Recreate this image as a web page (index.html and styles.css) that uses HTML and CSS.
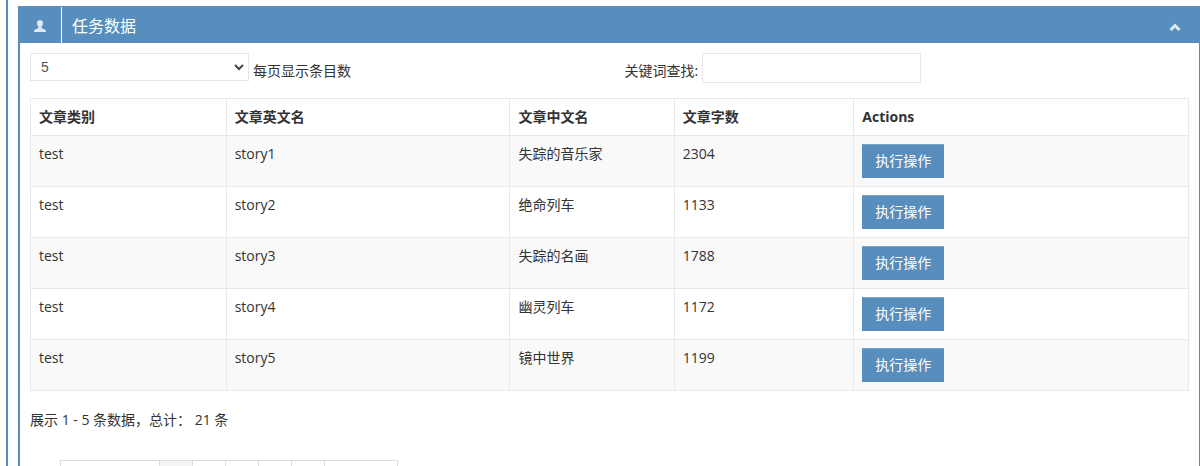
FILE: index.html
```
<!DOCTYPE html>
<html lang="zh-CN">
<head>
    <meta charset="UTF-8">
    <meta name="viewport" content="width=device-width, initial-scale=1.0">
    <title>任务数据</title>
    <link rel="stylesheet" href="styles.css">
</head>
<body>
    <div class="page-box">
        <div class="portlet">
            <div class="portlet-title">
                <div class="title-icon">
                    <svg width="12" height="12" viewBox="0 0 12 12" aria-hidden="true">
                        <path d="M6 0C4 0 3 1.100 3 2.900c0 1.500.6 2.900 1.300 3.700.4.600.3 1.300-.2 1.600L1.100 9.500C.300 9.900 0 10.400 0 11v1h12v-1c0-.6-.3-1.100-1.100-1.500L7.900 8.200c-.5-.3-.6-1-.2-1.600C8.400 5.800 9 4.400 9 2.900 9 1.100 8 0 6 0z"/>
                    </svg>
                </div>
                <h2 class="caption">任务数据</h2>
                <button type="button" class="collapse-btn" aria-label="收起">
                    <svg width="12" height="8" viewBox="0 0 12 8" aria-hidden="true">
                        <path d="M1.500 7L6 2.500L10.500 7"/>
                    </svg>
                </button>
            </div>

            <div class="portlet-body">
                <!-- Page size and search -->
                <div class="toolbar">
                    <div class="toolbar-item">
                        <span class="select-wrap">
                            <select id="page-size" class="form-control">
                                <option selected>5</option>
                                <option>15</option>
                                <option>20</option>
                            </select>
                            <svg class="select-arrow" width="10" height="7" viewBox="0 0 10 7" aria-hidden="true">
                                <path d="M1 1l4 4 4-4"/>
                            </svg>
                        </span>
                        <label for="page-size">每页显示条目数</label>
                    </div>
                    <div class="toolbar-item">
                        <label for="keyword">关键词查找:</label>
                        <input type="text" id="keyword" class="form-control search-input">
                    </div>
                </div>

                <table class="data-table">
                    <colgroup>
                        <col class="col-type">
                        <col class="col-en">
                        <col class="col-cn">
                        <col class="col-words">
                        <col class="col-actions">
                    </colgroup>
                    <thead>
                        <tr>
                            <th>文章类别</th>
                            <th>文章英文名</th>
                            <th>文章中文名</th>
                            <th>文章字数</th>
                            <th>Actions</th>
                        </tr>
                    </thead>
                    <tbody>
                        <tr>
                            <td>test</td>
                            <td>story1</td>
                            <td>失踪的音乐家</td>
                            <td>2304</td>
                            <td><button type="button" class="btn">执行操作</button></td>
                        </tr>
                        <tr>
                            <td>test</td>
                            <td>story2</td>
                            <td>绝命列车</td>
                            <td>1133</td>
                            <td><button type="button" class="btn">执行操作</button></td>
                        </tr>
                        <tr>
                            <td>test</td>
                            <td>story3</td>
                            <td>失踪的名画</td>
                            <td>1788</td>
                            <td><button type="button" class="btn">执行操作</button></td>
                        </tr>
                        <tr>
                            <td>test</td>
                            <td>story4</td>
                            <td>幽灵列车</td>
                            <td>1172</td>
                            <td><button type="button" class="btn">执行操作</button></td>
                        </tr>
                        <tr>
                            <td>test</td>
                            <td>story5</td>
                            <td>镜中世界</td>
                            <td>1199</td>
                            <td><button type="button" class="btn">执行操作</button></td>
                        </tr>
                    </tbody>
                </table>

                <p class="table-info">展示 1 - 5 条数据，总计： 21 条</p>

                <!-- Pagination -->
                <ul class="pagination">
                    <li class="prev"><a href="#">← 上一页</a></li>
                    <li class="active"><a href="#">1</a></li>
                    <li><a href="#">2</a></li>
                    <li><a href="#">3</a></li>
                    <li><a href="#">4</a></li>
                    <li><a href="#">5</a></li>
                    <li class="next"><a href="#">下一页</a></li>
                </ul>
            </div>
        </div>
    </div>
</body>
</html>
```

FILE: styles.css
```
* {
    box-sizing: border-box;
    margin: 0;
    padding: 0;
}

body {
    height: 100vh;
    overflow: hidden;
    font-family: "Open Sans", "Noto Sans CJK SC", sans-serif;
    font-size: 14px;
    line-height: 20px;
    color: #333;
    background-color: #fff;
}

.page-box {
    margin-left: 6px;
    padding: 6px 0 0 10px;
    border-left: 2px solid #578ebe;
}

.portlet {
    border: 1px solid #578ebe;
    border-left-width: 2px;
}

/* Title bar */
.portlet-title {
    display: flex;
    height: 36px;
    background-color: #578ebe;
    color: #fff;
}

.title-icon {
    display: flex;
    align-items: center;
    justify-content: center;
    width: 42px;
    padding: 2px 2px 0 0;
    border-right: 1px solid #fff;
}

.title-icon svg {
    fill: #dce8f2;
}

.caption {
    flex: 1;
    padding-left: 10px;
    font-size: 16px;
    font-weight: 400;
    line-height: 38px;
}

.collapse-btn {
    width: 48px;
    padding-top: 2px;
    border: none;
    background: none;
    cursor: pointer;
}

.collapse-btn svg {
    fill: none;
    stroke: #dce8f2;
    stroke-width: 3;
}

.portlet-body {
    padding: 10px;
}

/* Toolbar */
.toolbar {
    display: grid;
    grid-template-columns: 1fr 1fr;
    gap: 30px;
    margin-bottom: 15px;
}

.toolbar-item {
    display: flex;
    align-items: flex-start;
    gap: 4px;
}

.toolbar-item label {
    line-height: 36px;
    height: 30px;
}

.form-control {
    width: 219px;
    height: 28px;
    padding: 4px 10px;
    border: 1px solid #e5e5e5;
    border-radius: 0;
    background-color: #fff;
    font-family: inherit;
    font-size: 14px;
    color: #555;
}

.search-input {
    height: 30px;
}

.select-wrap {
    position: relative;
}

select.form-control {
    display: block;
    appearance: none;
    font-family: "Liberation Sans", sans-serif;
}

.select-arrow {
    position: absolute;
    top: 11px;
    right: 5px;
    fill: none;
    stroke: #444;
    stroke-width: 2;
    pointer-events: none;
}

/* Table Styles */
.data-table {
    width: 100%;
    table-layout: fixed;
    border-collapse: collapse;
}

.data-table th,
.data-table td {
    padding: 8px;
    text-align: left;
    vertical-align: top;
    border: 1px solid #e9e9e9;
}

.data-table th {
    font-weight: 700;
}

.data-table tbody tr:nth-child(odd) {
    background-color: #f9f9f9;
}

.col-type {
    width: 16.9%;
}

.col-en {
    width: 24.5%;
}

.col-cn {
    width: 14.2%;
}

.col-words {
    width: 15.5%;
}

.btn {
    display: block;
    height: 34px;
    padding: 6px 12px;
    border: 1px solid #578ebe;
    border-top-color: #7ba6cc;
    background-color: #578ebe;
    color: #fff;
    font-family: inherit;
    font-size: 14px;
    line-height: 20px;
    cursor: pointer;
}

.table-info {
    margin: 19px 0 30px;
}

/* Pagination */
.pagination {
    display: flex;
    margin-left: 30px;
    list-style: none;
}

.pagination li {
    width: 33px;
    border: 1px solid #ddd;
    border-right: none;
}

.pagination .prev {
    width: 99px;
}

.pagination .next {
    width: 74px;
    border-right: 1px solid #ddd;
}

.pagination .active {
    background-color: #f5f5f5;
}

.pagination a {
    display: block;
    padding: 8px 0;
    text-align: center;
    text-decoration: none;
    color: #333;
}
```
